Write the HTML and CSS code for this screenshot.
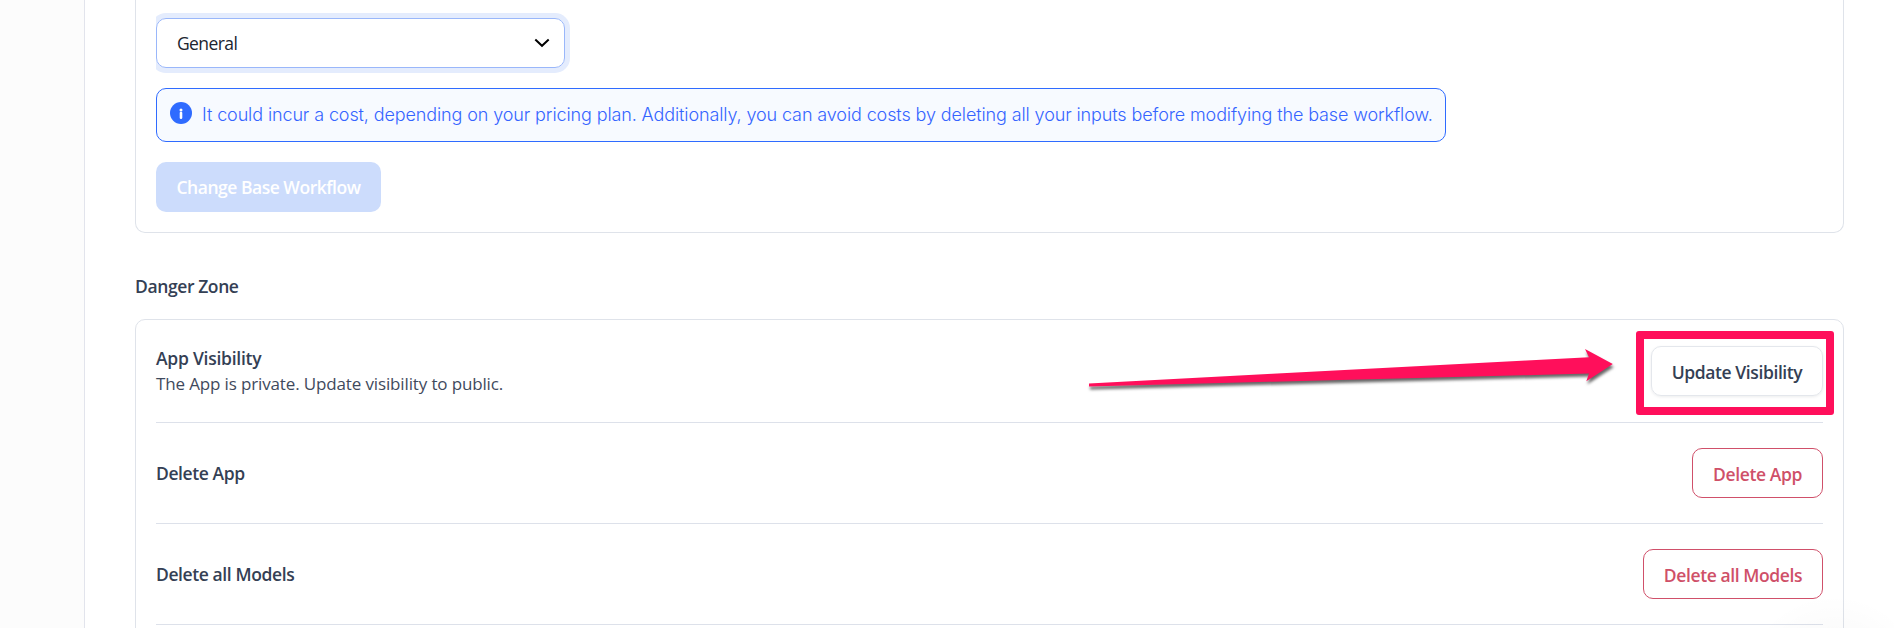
FILE: index.html
```html
<!DOCTYPE html>
<html lang="en">
<head>
<meta charset="utf-8">
<title>App Settings</title>
<link rel="stylesheet" href="styles.css">
</head>
<body>
<div class="layout">
  <aside class="sidebar"></aside>
  <main class="main">
    <section class="card workflow">
      <div class="select-wrap">
        <div class="select">
          <span class="t-general">General</span>
          <svg class="chevron" width="16" height="10" viewBox="0 0 16 10"><path d="M1.3 1.6 8 7.8 14.7 1.6" fill="none" stroke="#000" stroke-width="2"/></svg>
        </div>
      </div>
      <div class="info">
        <svg class="info-icon" width="22" height="22" viewBox="0 0 22 22"><circle cx="11" cy="11" r="11" fill="#2f6bff"/><circle cx="11" cy="7.9" r="1.5" fill="#fff"/><path d="M11 11v4.8" stroke="#fff" stroke-width="2.6" stroke-linecap="round"/></svg>
        <span class="t-info">It could incur a cost, depending on your pricing plan. Additionally, you can avoid costs by deleting all your inputs before modifying the base workflow.</span>
      </div>
      <div class="btn primary"><span class="t-change">Change Base Workflow</span></div>
    </section>
    <h2 class="heading"><span class="t-zone">Danger Zone</span></h2>
    <section class="card danger">
      <div class="row first">
        <div class="label"><span class="t-appvis">App Visibility</span><span class="desc">The App is private. Update visibility to public.</span></div>
        <div class="btn outline w-update"><span class="t-update">Update Visibility</span></div>
      </div>
      <div class="row">
        <div class="label"><span class="t-del">Delete App</span></div>
        <div class="btn red w-del"><span class="t-del">Delete App</span></div>
      </div>
      <div class="row">
        <div class="label"><span class="t-models">Delete all Models</span></div>
        <div class="btn red w-models"><span class="t-models">Delete all Models</span></div>
      </div>
    </section>
  </main>
</div>
<div class="corner-shade"></div>
<div class="highlight"></div>
<svg class="arrow" width="540" height="50" viewBox="1080 345 540 50"><path d="M1089 383.4 1589 357.3 1585 349 1612.8 364 1586.3 381.3 1589 373.6 1089 386.4Z" fill="#ff0f5b"/></svg>
</body>
</html>
```
FILE: styles.css
```css
* { box-sizing: border-box; }
body {
  margin: 0;
  height: 628px;
  overflow: hidden;
  background: #fff;
  color: #344054;
  font: 600 17.5px/26px "Open Sans", "Noto Sans", sans-serif;
}
span { white-space: nowrap; }
.layout { display: flex; height: 628px; overflow: hidden; }
.sidebar { width: 85px; flex: none; background: #fcfcfc; border-right: 1px solid #e2e4ec; }
.main { flex: 1; padding: 0 50px; }
.card { border: 1px solid #dfe3ea; border-radius: 10px; padding: 0 20px; }
.workflow { height: 233px; border-top: 0; border-radius: 0 0 10px 10px; display: flex; flex-direction: column; align-items: flex-start; }
.select-wrap { padding: 18px 5px 20px 0; overflow: hidden; }
.select {
  width: 409px; height: 50px; padding: 0 14px 0 20px;
  display: flex; align-items: center; justify-content: space-between;
  border: 1px solid #9ab7fa; border-radius: 10px;
  box-shadow: 0 0 0 5px #e4ecfd; color: #20242f; font-weight: 500;
}
.info {
  width: 1290px; height: 54px; padding: 0 12px 0 13px; margin-bottom: 20px;
  display: flex; align-items: center; gap: 10px;
  border: 1px solid #2f6bff; border-radius: 10px; background: #f7faff;
  color: #3564ff; font-family: Inter, sans-serif; font-weight: 300; font-size: 18px;
}
.info-icon { margin-bottom: 4px; flex: none; }
.t-info { letter-spacing: -.115px; }
.btn { height: 50px; border-radius: 10px; display: flex; align-items: center; justify-content: center; flex: none; padding-top: 2px; font-weight: 560; }
.primary { width: 225px; background: #ccdcfc; color: #fff; font-weight: 600; padding-top: 0; }
.outline { border: 1px solid #e4e7ec; box-shadow: 0 1px 3px rgba(16, 24, 40, .08); }
.red { border: 1px solid #d0506a; color: #cf5068; }
.w-update { width: 172px; }
.w-del { width: 131px; }
.w-models { width: 180px; }
.t-general { letter-spacing: -.6px; }
.t-change { letter-spacing: -.48px; }
.t-zone, .t-del { letter-spacing: -.4px; }
.t-models, .t-update { letter-spacing: -.4px; }
.t-appvis { letter-spacing: -.25px; }
.heading { margin: 0; height: 86px; padding-top: 40px; font: inherit; }
.danger { height: 420px; }
.row { height: 101px; border-bottom: 1px solid #dde1ea; display: flex; align-items: center; justify-content: space-between; }
.first { height: 103px; }
.label { display: flex; flex-direction: column; align-items: flex-start; }
.row:not(.first) .label { padding-bottom: 1px; }
.desc { font-size: 17px; font-weight: 400; letter-spacing: -.14px; color: #3f4a5d; }
.highlight { position: absolute; left: 1636px; top: 331px; width: 198px; height: 84px; border: 8px solid #ff0f5b; border-radius: 3px; }
.arrow { position: absolute; left: 1080px; top: 345px; overflow: visible; filter: drop-shadow(1px 3px 1.5px rgba(0, 0, 0, .6)); }
.corner-shade {
  position: absolute; right: 0; bottom: 0; width: 130px; height: 32px;
  background: radial-gradient(circle at 70px 90px, rgba(0, 0, 0, .04), rgba(0, 0, 0, 0) 92px);
}
```
